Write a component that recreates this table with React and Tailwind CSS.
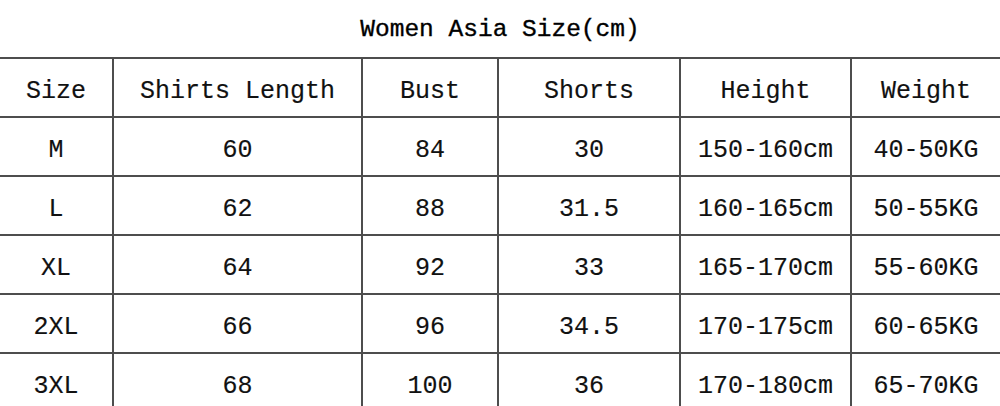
const columns = ["Size", "Shirts Length", "Bust", "Shorts", "Height", "Weight"];

const rows = [
  ["M", "60", "84", "30", "150-160cm", "40-50KG"],
  ["L", "62", "88", "31.5", "160-165cm", "50-55KG"],
  ["XL", "64", "92", "33", "165-170cm", "55-60KG"],
  ["2XL", "66", "96", "34.5", "170-175cm", "60-65KG"],
  ["3XL", "68", "100", "36", "170-180cm", "65-70KG"],
];

const Cell = ({ children, first }) => (
  <div
    className={`h-[59px] pt-[9px] flex items-center justify-center border-t-2 border-[#4d4d4d] text-[25px] text-[#111] [-webkit-text-stroke:0.15px_#111] ${
      first ? "" : "border-l-2"
    }`}
  >
    {children}
  </div>
);

const App = () => (
  <div className="w-[1000px] h-[406px] overflow-hidden bg-white font-['Liberation_Mono','Courier_New',monospace]">
    <div className="h-[57px] pt-[4px] flex items-center justify-center text-[24.5px] text-black [-webkit-text-stroke:0.35px_black]">
      Women Asia Size(cm)
    </div>
    <div className="grid grid-cols-[112px_249px_136px_182px_171px_150px]">
      {columns.map((c, i) => (
        <Cell key={c} first={i === 0}>
          {c}
        </Cell>
      ))}
      {rows.map((r) =>
        r.map((v, i) => (
          <Cell key={r[0] + i} first={i === 0}>
            {v}
          </Cell>
        ))
      )}
    </div>
  </div>
);

export default App;
